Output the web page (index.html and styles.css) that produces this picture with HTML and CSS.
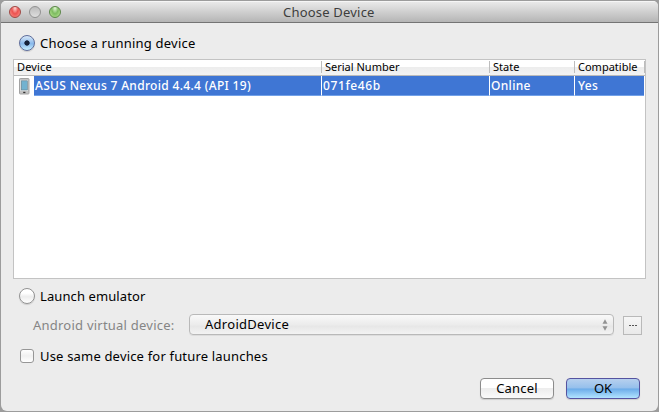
FILE: index.html
```html
<!DOCTYPE html>
<html lang="en">
<head>
<meta charset="utf-8">
<title>Choose Device</title>
<link rel="stylesheet" href="styles.css">
</head>
<body>
<main class="window">
  <header class="titlebar">
    <div class="lights"><i class="light red"></i><i class="light gray"></i><i class="light green"></i></div>
    <h1 class="title">Choose Device</h1>
  </header>
  <div class="content">
    <label class="option running"><i class="radio checked"></i><span class="t-running">Choose a running device</span></label>
    <section class="table">
      <div class="grid head">
        <span class="h-device">Device</span><span class="h-serial">Serial Number</span><span class="h-state">State</span><span class="h-compat">Compatible</span>
      </div>
      <div class="grid row">
        <div class="device">
          <svg class="phone" width="11" height="17" viewBox="0 0 11 17"><rect x=".5" y=".5" width="9.5" height="15.5" rx=".8" fill="#c4c4c4" stroke="#a3a3a3"/><rect x="1.5" y="2" width="7.5" height="11" fill="#e8eef0"/><rect x="2.3" y="2.8" width="6" height="9.2" fill="#72b2d0" stroke="#627d8a" stroke-width=".6"/><rect x="4.2" y="13.8" width="2.2" height="1.3" fill="#333"/></svg>
          <span class="cell c-device">ASUS Nexus 7 Android 4.4.4 (API 19)</span>
        </div>
        <span class="cell c-serial">071fe46b</span><span class="cell c-state">Online</span><span class="cell c-compat">Yes</span>
      </div>
    </section>
    <label class="option launch"><i class="radio"></i><span class="t-launch">Launch emulator</span></label>
    <div class="avd">
      <span class="avd-label">Android virtual device:</span>
      <div class="select"><span>AdroidDevice</span>
        <svg width="6" height="12" viewBox="0 0 6 12"><path d="M3 .3 5.5 4.8H.5zM3 11.7.5 7.2h5z" fill="#929292"/></svg>
      </div>
      <div class="more"><i></i><i></i><i></i></div>
    </div>
    <label class="option same"><i class="checkbox"></i><span class="t-same">Use same device for future launches</span></label>
    <footer class="actions"><div class="button"><span class="t-cancel">Cancel</span></div><div class="button primary"><span class="t-ok">OK</span></div></footer>
  </div>
</main>
</body>
</html>
```
FILE: styles.css
```css
* { box-sizing: border-box; }
body { margin: 0; width: 659px; height: 412px; overflow: hidden; background: #9c9c9c; color: #000; font: 13px/20px "Noto Sans", "Open Sans", sans-serif; white-space: nowrap; }
.window { width: 657px; height: 410px; margin: 1px; margin-right: 0; background: #ececec; border-radius: 5px 5px 6px 6px; overflow: hidden; }
.titlebar { display: grid; grid-template-columns: 282px 1fr; height: 22px; background: linear-gradient(#e9e9e9, #b5b5b5); border-top: 1px solid #f6f6f6; border-bottom: 1px solid #747474; }
.lights { display: flex; gap: 8px; padding: 4px 0 0 8px; }
.light { width: 12px; height: 12px; border-radius: 50%; border: 1px solid #888; }
.red { background: radial-gradient(ellipse at 50% 10%, #ffd8d4, #ec5250 45%, #ff9c92); border-color: #a04743; }
.gray { background: linear-gradient(#bcbcbc, #dedede); border-color: #919191; }
.green { background: radial-gradient(ellipse at 50% 10%, #e5f8d8, #7dbb60 45%, #c5f09e); border-color: #5a8647; }
.title { margin: 0; font-size: 13px; font-weight: 400; line-height: 20px; color: #3d3d3d; letter-spacing: .2px; }
.content { padding: 12px 0 0 12px; }
.option { display: flex; align-items: center; height: 16px; padding-left: 6px; gap: 5px; }
.radio { width: 16px; height: 16px; border-radius: 50%; border: 1px solid #929292; background: linear-gradient(#fff 30%, #ededed 55%, #fff); box-shadow: 0 1px 1px #0002; }
.checked { border-color: #5e6d9b; background: radial-gradient(circle, #142139 0 2.3px, transparent 3px), linear-gradient(#d9e8f8, #87b8eb 55%, #c8f0ff); }
.t-running { letter-spacing: .22px; }
.t-launch { letter-spacing: .1px; }
.t-same { letter-spacing: .18px; }
.table { width: 633px; height: 220px; margin-top: 8px; background: #fff; border: 1px solid #c3c3c3; }
.grid { display: grid; grid-template-columns: 307px 168px 85px 70px; }
.head { height: 16px; font-size: 11px; line-height: 15px; background: linear-gradient(#fff 45%, #ededed 50%, #f3f3f3); border-bottom: 1px solid #bbb; }
.head span { padding-left: 3px; border-left: 1px solid #bdbdbd; height: 12px; margin-top: 1px; line-height: 12px; }
.head .h-device { border: 0; letter-spacing: .15px; }
.head .h-compat { border-right: 1px solid #bdbdbd; width: 71px; }
.row { height: 20px; color: #fff; font-size: 12px; line-height: 20px; }
.device { display: grid; grid-template-columns: 20px 287px; }
.phone { margin: 2px 0 0 5px; }
.cell { background: #3f76d4; border-bottom: 1px solid #72a1e8; padding-left: 1px; height: 20px; line-height: 19px; font-weight: 500; letter-spacing: .32px; }
.c-serial, .c-state, .c-compat { border-left: 1px solid #fff; }
.c-serial { line-height: 20px; letter-spacing: .6px; }
.c-state { line-height: 20px; }
.c-compat { padding-left: 3px; }
.launch { margin-top: 9px; }
.avd { display: flex; height: 21px; margin-top: 10px; padding-left: 20px; }
.avd-label { width: 156px; line-height: 22px; color: #858585; letter-spacing: .23px; }
.select { display: flex; align-items: center; justify-content: space-between; width: 425px; height: 21px; padding: 0 5px 0 15px; border: 1px solid #b9b9b9; border-radius: 4px; background: linear-gradient(#f9f9f9, #ececec 50%, #e7e7e7 60%, #f3f3f3); box-shadow: 0 1px 0 #ddd; letter-spacing: .28px; }
.select span { line-height: 19px; }
.more { display: flex; justify-content: center; align-items: center; gap: 1px; width: 19px; height: 19px; margin: 2px 0 0 9px; border: 1px solid #b9b9b9; background: linear-gradient(#f6f6f6, #e9e9e9); }
.more i { width: 2px; height: 1px; background: #555; }
.same { margin-top: 13px; padding-left: 7px; gap: 6px; }
.checkbox { width: 14px; height: 14px; border: 1px solid #969696; border-radius: 3px; background: linear-gradient(#fff, #f0f0f0 50%, #fff); }
.actions { display: flex; gap: 12px; padding-left: 467px; margin-top: 14px; }
.button { width: 74px; height: 21px; border: 1px solid #8c8c8c; border-radius: 4px; background: linear-gradient(#fff 45%, #ededed 50%, #fafafa); box-shadow: 0 1px 1px #0002; text-align: center; line-height: 19px; }
.t-cancel { letter-spacing: .2px; }
.primary { border-color: #5553a0; background: linear-gradient(#b7d0ee, #94bfec 49%, #6aaae8 51%, #b2e4ff); }
```
